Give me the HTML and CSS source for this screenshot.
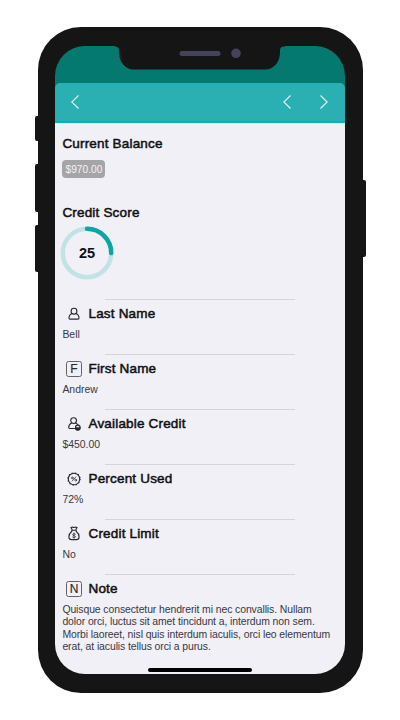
FILE: index.html
```
<!DOCTYPE html>
<html lang="en">
<head>
<meta charset="utf-8">
<title>Credit details</title>
<link rel="stylesheet" href="styles.css">
</head>
<body>
<div class="phone">
  <i class="side mute"></i><i class="side up"></i><i class="side down"></i><i class="side power"></i>
  <main class="screen">
    <div class="status"></div>
    <nav class="bar">
      <svg class="chev back" viewBox="0 0 8 14"><path d="M7.5.5.8 7l6.700 6.500"/></svg>
      <svg class="chev prev" viewBox="0 0 8 14"><path d="M7.5.5.8 7l6.700 6.500"/></svg>
      <svg class="chev" viewBox="0 0 8 14"><path d="M.5.5 7.200 7 .5 13.500"/></svg>
    </nav>
    <section class="balance"><h2>Current Balance</h2><span class="badge">$970.00</span></section>
    <section class="score"><h2>Credit Score</h2>
      <div class="gauge">
        <svg viewBox="0 0 54 54"><circle class="track" cx="27" cy="27" r="24.2"/><path class="value" d="M27 2.8A24.2 24.2 0 0 1 51.2 27"/></svg>
        <b>25</b>
      </div>
    </section>
    <section class="row"><h3><svg class="icon" viewBox="0 0 16 16"><circle cx="8" cy="5.2" r="2.9"/><path d="M6.1 7.6C4.2 8.300 3 10 3 12.200q0 .9.9.9h8.200q.9 0 .9-.9c0-2.200-1.200-3.900-3.100-4.600"/></svg>Last Name</h3><p>Bell</p></section>
    <section class="row"><h3><span class="icon letter">F</span>First Name</h3><p>Andrew</p></section>
    <section class="row"><h3><svg class="icon" viewBox="0 0 16 16"><circle cx="7.600" cy="4.600" r="2.900"/><path d="M5.700 7.100C3.700 7.900 2.700 9.600 2.700 11.600q0 .9.9.9h4.900M9.500 7.100q1.800.6 2.500 2"/><circle cx="11.800" cy="11.400" r="2.300"/><path class="fill" d="M9.600 11.900H14a2.200 2.200 0 0 1-4.400 0z"/></svg>Available Credit</h3><p>$450.00</p></section>
    <section class="row"><h3><svg class="icon" viewBox="0 0 16 16"><circle cx="8" cy="8" r="5.700"/><circle class="teeth" cx="8" cy="8" r="6.100"/><path class="thin" d="m6.200 10 3.600-4"/><circle class="thin" cx="6.300" cy="6.900" r=".9"/><circle class="thin" cx="9.700" cy="9.100" r=".9"/></svg>Percent Used</h3><p>72%</p></section>
    <section class="row"><h3><svg class="icon" viewBox="0 0 16 16"><path d="M6.200 3.800 4.900 1.500q1.500-.7 3.100 0 1.600-.7 3.100 0L9.800 3.800M5.700 4.300h4.600M5.900 5.300C4 6.800 2.900 8.900 2.900 10.900c0 1.900 1 2.700 2.700 2.700h4.800c1.700 0 2.700-.8 2.700-2.700 0-2-1.100-4.100-3-5.600"/><path class="thin" d="M9.500 8.200C8.800 7.400 6.600 7.500 6.600 8.700c0 1.400 2.900.6 2.900 2 0 1.200-2.200 1.300-3 .3M8 6.900v5.300"/></svg>Credit Limit</h3><p>No</p></section>
    <section class="row"><h3><span class="icon letter">N</span>Note</h3><p class="note">Quisque consectetur hendrerit mi nec convallis. Nullam<br>dolor orci, luctus sit amet tincidunt a, interdum non sem.<br>Morbi laoreet, nisl quis interdum iaculis, orci leo elementum<br>erat, at iaculis tellus orci a purus.</p></section>
    <i class="home"></i>
  </main>
  <svg class="notch" viewBox="0 0 170 28"><path d="M0 0h170v4.500h-1c-2.700 0-4 1.400-4 4V10c0 10-6 17.500-15 17.500H19c-9 0-15-7.500-15-17.500V8.500c0-2.600-1.300-4-4-4z"/><rect x="64.500" y="9" width="41" height="5" rx="2.500"/><circle cx="121" cy="11.300" r="4.800"/></svg>
</div>
</body>
</html>
```
FILE: styles.css
```
* { box-sizing: border-box; }
body { margin: 0; width: 400px; height: 720px; overflow: hidden; background: #fff; font-family: "Liberation Sans", Arial, sans-serif; color: #101014; }
.phone { position: relative; width: 325px; height: 666px; margin: 27px 0 0 37.5px; padding: 18.500px 17.500px 19px; border-radius: 43px; background: #151515; }
.side { position: absolute; left: -3px; width: 5px; border-radius: 2px; background: #151515; }
.mute { top: 89px; height: 25px; }
.up { top: 137px; height: 48px; }
.down { top: 198px; height: 47px; }
.power { left: auto; right: -3px; top: 153px; height: 77px; }
.screen { position: relative; display: flex; flex-direction: column; height: 100%; border-radius: 30px; overflow: hidden; background: linear-gradient(#037970 60px, #f1f0f6 60px); }
.status { height: 37.500px; flex: none; }
.bar { height: 39.500px; flex: none; display: flex; align-items: center; padding: 1px 17px 0 16px; background: #2aafb2; border-bottom: 2px solid #08b3b7; border-radius: 5px 5px 0 0; }
.chev { width: 8px; height: 14px; fill: none; stroke: #e0f6f6; stroke-width: 1.150; }
.back { margin-right: auto; }
.prev { margin-right: 29px; }
h2, h3, p { margin: 0; }
h2, h3 { font-size: 13.500px; font-weight: 400; line-height: 18px; letter-spacing: .18px; -webkit-text-stroke: .5px #101014; }
section { padding-left: 7.400px; }
.balance { height: 69.500px; padding-top: 12px; flex: none; }
.badge { display: block; width: 43px; height: 18px; margin-top: 7.500px; border-radius: 4px; background: #a5a5a8; color: #f3f3f5; font-size: 10.200px; line-height: 19px; text-align: center; }
.score { height: 107.500px; padding-top: 11.500px; flex: none; }
.gauge { display: grid; place-items: center; width: 54px; height: 54px; margin: 4px 0 0 -2.400px; }
.gauge svg, .gauge b { grid-area: 1 / 1; }
.gauge svg { width: 54px; height: 54px; fill: none; stroke-width: 4.500; }
.gauge b { font-size: 14.500px; }
.track { stroke: #c2e3e5; }
.value { stroke: #0ba5a3; stroke-linecap: round; }
.row { position: relative; height: 55px; padding-top: 5.500px; flex: none; }
.row::before { content: ""; position: absolute; top: -.5px; left: 50px; width: 190px; height: 1px; background: #d5d4da; }
.row h3 { display: flex; align-items: center; height: 18px; }
.icon { width: 16px; height: 16px; margin: 0 6.500px 0 3.600px; flex: none; fill: none; stroke: #28282e; stroke-width: 1.100; stroke-linecap: round; stroke-linejoin: round; }
.letter { height: 16px; border: 1px solid #626268; border-radius: 2.500px; font-size: 12px; line-height: 14px; letter-spacing: 0; text-align: center; -webkit-text-stroke: .15px #28282e; color: #28282e; }
.teeth { stroke-dasharray: 1.300 1.894; stroke-linecap: butt; }
.thin { stroke-width: .75; }
.fill { fill: #28282e; }
.row p { margin-top: 5.500px; font-size: 10.450px; line-height: 12.500px; color: #38383f; white-space: nowrap; }
.row .note { letter-spacing: -.1px; }
.home { position: absolute; bottom: 2px; left: 93px; width: 104px; height: 4px; border-radius: 2px; background: #000; }
.notch { position: absolute; left: 77.500px; top: 14.500px; width: 170px; height: 28px; fill: #151515; }
.notch rect, .notch circle { fill: #45435c; }
```
